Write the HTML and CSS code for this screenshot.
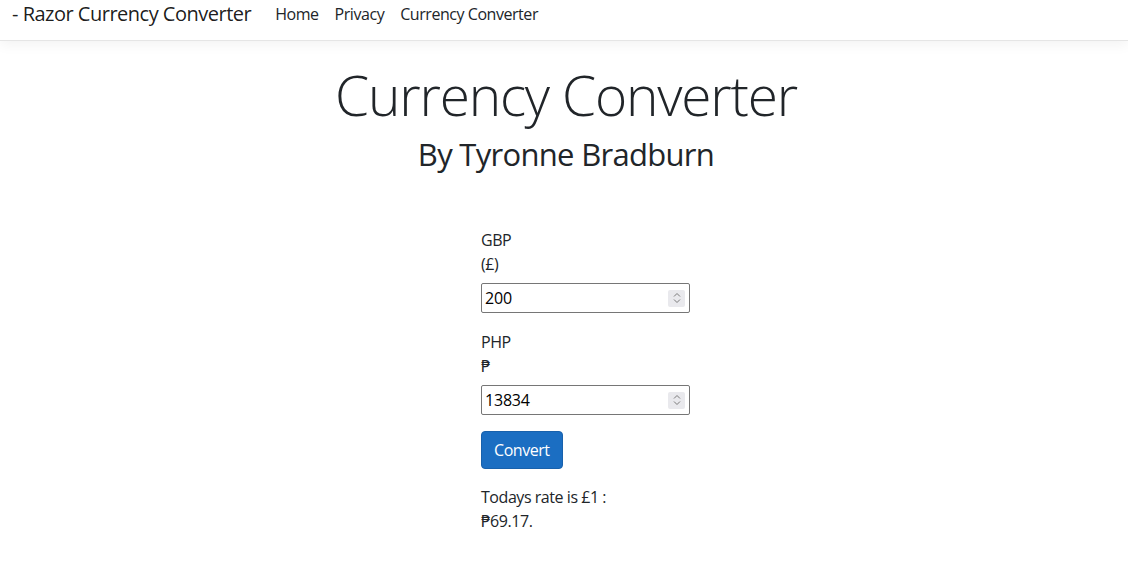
FILE: index.html
```html
<!DOCTYPE html>
<html lang="en">
<head>
<meta charset="utf-8">
<title>Currency Converter - Razor Currency Converter</title>
<link rel="stylesheet" href="styles.css">
</head>
<body>
<header class="topbar">
  <nav class="navbar">
    <a class="brand" href="#">- Razor Currency Converter</a>
    <ul class="nav">
      <li><a class="nav-link" href="#">Home</a></li>
      <li><a class="nav-link" href="#">Privacy</a></li>
      <li><a class="nav-link" href="#">Currency Converter</a></li>
    </ul>
  </nav>
</header>
<main class="page">
  <h1 class="title">Currency Converter</h1>
  <h2 class="subtitle">By Tyronne Bradburn</h2>
  <form class="converter">
    <div class="field">
      <label class="code" for="gbp">GBP</label>
      <div class="symbol">(£)</div>
      <div class="numbox">
        <input class="num" id="gbp" type="text" value="200">
        <span class="spin"><svg width="8" height="12" viewBox="0 0 8 12"><path d="M1 4.5 L4 1.5 L7 4.5 M1 7.5 L4 10.5 L7 7.5" fill="none" stroke="#7a7a7a" stroke-width="1"/></svg></span>
      </div>
    </div>
    <div class="field field-next">
      <label class="code" for="php">PHP</label>
      <div class="symbol"><span class="peso">₱</span></div>
      <div class="numbox">
        <input class="num" id="php" type="text" value="13834">
        <span class="spin"><svg width="8" height="12" viewBox="0 0 8 12"><path d="M1 4.5 L4 1.5 L7 4.5 M1 7.5 L4 10.5 L7 7.5" fill="none" stroke="#7a7a7a" stroke-width="1"/></svg></span>
      </div>
    </div>
    <button class="btn" type="button">Convert</button>
    <p class="rate">Todays rate is £1 : <span class="peso">₱</span>69.17.</p>
  </form>
</main>
</body>
</html>
```
FILE: styles.css
```css
* { box-sizing: border-box; }
html, body { margin: 0; padding: 0; }
body {
  font-family: "Open Sans", "DejaVu Sans", sans-serif;
  font-size: 16px;
  line-height: 24px;
  letter-spacing: -0.45px;
  color: #212529;
  background: #fff;
}
.topbar {
  height: 41px;
  border-bottom: 1px solid #e5e5e5;
  box-shadow: 0 4px 12px rgba(0,0,0,0.05);
  background: #fff;
}
.navbar {
  display: flex;
  align-items: flex-start;
  padding: 0 16px 0 12px;
}
.brand {
  font-size: 20px;
  line-height: 28px;
  letter-spacing: -0.5px;
  color: rgba(0,0,0,0.9);
  text-decoration: none;
  margin-right: 16px;
}
.nav {
  display: flex;
  list-style: none;
  margin: 0;
  padding: 0;
}
.nav-link {
  display: block;
  padding: 2px 8px 0;
  line-height: 24px;
  color: #212529;
  text-decoration: none;
}
.page {
  display: flex;
  flex-direction: column;
  align-items: center;
  padding-left: 4px;
}
.title {
  margin: 20px 0 7px;
  font-size: 55px;
  font-weight: 300;
  line-height: 67px;
  letter-spacing: -1.2px;
}
.subtitle {
  margin: 0;
  font-size: 31px;
  font-weight: 400;
  line-height: 38px;
  letter-spacing: -0.7px;
}
.converter {
  width: 166px;
  margin-top: 55px;
  margin-right: 4px;
}
.code, .symbol { display: block; height: 24px; }
.peso { font-size: 15px; }
.field-next { margin-top: 17px; }
.numbox {
  display: flex;
  align-items: center;
  width: 209px;
  height: 30px;
  margin-top: 7px;
  border: 1px solid #767676;
  border-radius: 2px;
  background: #fff;
}
.num {
  flex: 1;
  min-width: 0;
  border: 0;
  outline: 0;
  padding: 0 3px;
  font-family: inherit;
  font-size: 16px;
  letter-spacing: -0.2px;
  color: #000;
  background: transparent;
}
.spin {
  display: flex;
  align-items: center;
  justify-content: center;
  width: 17px;
  height: 17px;
  margin-right: 4px;
  background: #e9e9ed;
  border-radius: 2px;
}
.btn {
  display: block;
  margin-top: 16px;
  height: 38px;
  padding: 0 12px;
  font-family: inherit;
  font-size: 16px;
  line-height: 24px;
  letter-spacing: -0.45px;
  color: #fff;
  background: #1b6ec2;
  border: 1px solid #1861ac;
  border-radius: 4px;
}
.rate {
  margin: 16px 0 0;
}
```
